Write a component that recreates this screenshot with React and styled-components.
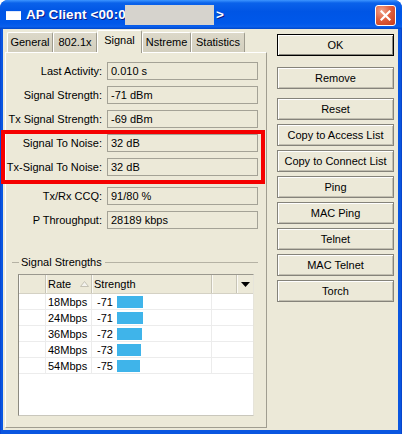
import React from 'react';
import styled, { createGlobalStyle } from 'styled-components';

const Global = createGlobalStyle`
  html, body { margin: 0; padding: 0; background: #ffffff; }
  body { font-family: "Liberation Sans", Arial, sans-serif; font-size: 11px; color: #000; }
`;

const Window = styled.div`
  position: relative;
  width: 402px;
  height: 434px;
  display: flex;
  flex-direction: column;
  background: linear-gradient(90deg, #0839c8 0, #0a56e0 1px, #0a56e0 calc(100% - 1px), #0634b8 100%);
  border-radius: 8px 8px 0 0;
  overflow: hidden;
`;

const TitleBar = styled.div`
  height: 29px;
  flex: none;
  display: flex;
  align-items: center;
  padding: 0 6px;
  background: linear-gradient(180deg, #3d95ff 0, #0a62ea 3px, #0055e5 40%, #0058ea 80%, #0a5fec 92%, #0046c8 100%);
  color: #fff;
`;

const AppIcon = styled.div`
  width: 15px;
  height: 8px;
  background: #ffffff;
  border-top: 1px solid #dfe9fb;
  margin-right: 5px;
  margin-top: 2px;
  flex: none;
`;

const TitleText = styled.div`
  font-family: "Liberation Sans", Arial, sans-serif;
  font-weight: bold;
  font-size: 13.5px;
  letter-spacing: 0.1px;
  text-shadow: 1px 1px 0 #0a1a8a;
  white-space: nowrap;
  display: flex;
  align-items: center;
`;

const Redacted = styled.span`
  display: inline-block;
  width: 89px;
  height: 20px;
  background: #d6d3cd;
  margin-left: -1px;
  margin-right: 2px;
`;

const CloseButton = styled.div`
  margin-left: auto;
  width: 21px;
  height: 21px;
  box-sizing: border-box;
  border: 1px solid #ffffff;
  border-radius: 3px;
  background: radial-gradient(circle at 30% 25%, #f0a48c 0, #e0603f 45%, #c83a17 100%);
  display: flex;
  align-items: center;
  justify-content: center;
  margin-top: 1px;
`;

const Frame = styled.div`
  flex: 1;
  display: flex;
  margin: 0 4px 4px 3px;
  background: #ece9d8;
  padding: 0 4px 1px 2px;
`;

const LeftColumn = styled.div`
  width: 262px;
  display: flex;
  flex-direction: column;
`;

const TabStrip = styled.div`
  height: 23px;
  display: flex;
  align-items: flex-end;
  padding-left: 2px;
  position: relative;
  z-index: 1;
`;

const Tab = styled.div`
  box-sizing: border-box;
  width: ${p => p.$w}px;
  height: ${p => (p.$active ? 23 : 20)}px;
  margin-bottom: ${p => (p.$active ? -1 : 0)}px;
  background: ${p => (p.$active ? '#ece9d8' : 'linear-gradient(180deg, #dcd8c9 0, #d3cfbe 100%)')};
  border-top: 1px solid #ffffff;
  border-left: 1px solid #ffffff;
  border-right: 1px solid #9e9b8e;
  border-radius: 2px 2px 0 0;
  display: flex;
  justify-content: center;
  padding-top: ${p => (p.$active ? 3 : 3)}px;
  font-size: 11px;
  white-space: nowrap;
`;

const Panel = styled.div`
  box-sizing: border-box;
  height: 376px;
  border-top: 1px solid #ffffff;
  border-left: 1px solid #ffffff;
  border-right: 1px solid #a09d90;
  border-bottom: 1px solid #a09d90;
  padding-top: 9px;
  display: flex;
  flex-direction: column;
`;

const FieldGroup = styled.div`
  display: flex;
  flex-direction: column;
  gap: 6px;
  margin-top: ${p => p.$top || 0}px;
`;

const FieldRow = styled.div`
  display: grid;
  grid-template-columns: 96px 151px;
  column-gap: 5px;
  align-items: center;
  height: 18px;
`;

const Label = styled.div`
  text-align: right;
  white-space: nowrap;
`;

const Field = styled.div`
  box-sizing: border-box;
  height: 18px;
  border: 1px solid #a4a296;
  padding-left: 3px;
  line-height: 16px;
  white-space: nowrap;
`;

const GroupTitle = styled.div`
  display: flex;
  align-items: center;
  gap: 2px;
  height: 14px;
  margin: 26px 8px 0 6px;
  white-space: nowrap;
  &::before {
    content: '';
    width: 7px;
    border-top: 1px solid #b5b2a4;
  }
  &::after {
    content: '';
    flex: 1;
    margin-left: 1px;
    border-top: 1px solid #b5b2a4;
  }
`;

const Table = styled.div`
  box-sizing: border-box;
  width: 236px;
  height: 142px;
  margin: 5px 0 0 12px;
  background: #ffffff;
  border-top: 1px solid #9a988e;
  border-left: 1px solid #8c8a80;
  border-right: 1px solid #e6e4da;
  border-bottom: 1px solid #c9c7bc;
  display: flex;
  flex-direction: column;
`;

const HeaderRow = styled.div`
  display: grid;
  grid-template-columns: 27px 46px 120px 25px 1fr;
  height: 18px;
  background: #ece9d8;
  border-bottom: 1px solid #d4d1c4;
  flex: none;
`;

const HeaderCell = styled.div`
  display: flex;
  align-items: center;
  padding-left: ${p => (p.$center ? 0 : 2)}px;
  justify-content: ${p => (p.$center ? 'center' : 'flex-start')};
  border-right: ${p => (p.$last ? 'none' : '1px solid #c7c4b6')};
  box-shadow: inset 1px 0 #fbfaf5;
  white-space: nowrap;
`;

const SortMark = styled.svg`
  margin-left: auto;
  margin-right: 2px;
`;

const BodyRow = styled.div`
  display: grid;
  grid-template-columns: 27px 46px 120px 1fr;
  height: 15px;
  border-bottom: 1px solid #ececec;
  flex: none;
`;

const BodyCell = styled.div`
  display: flex;
  align-items: center;
  padding-left: ${p => p.$pad || 0}px;
  border-right: ${p => (p.$last ? 'none' : '1px solid #ececec')};
  white-space: nowrap;
  line-height: 14px;
`;

const Value = styled.span`
  width: 20px;
  flex: none;
`;

const Bar = styled.div`
  height: 12px;
  background: #3fb4ea;
`;

const ButtonColumn = styled.div`
  width: 117px;
  margin-left: 10px;
  padding-top: 5px;
  display: flex;
  flex-direction: column;
`;

const Button = styled.div`
  box-sizing: border-box;
  height: 22px;
  width: 117px;
  margin-bottom: ${p => p.$gap}px;
  background: #ece9d8;
  border: 1px solid ${p => (p.$default ? '#000000' : '#85837a')};
  box-shadow: ${p => (p.$default ? 'inset 1px 1px #ffffff, inset -1px -1px #8a887e' : 'inset 1px 1px #ffffff, inset -1px -1px #c2bfb1')};
  display: flex;
  align-items: center;
  justify-content: center;
  font-size: 11px;
  white-space: nowrap;
`;

const Highlight = styled.div`
  position: absolute;
  left: 1px;
  top: 130px;
  width: 264px;
  height: 54px;
  box-sizing: border-box;
  border: 4px solid #f50000;
  pointer-events: none;
`;

const tabs = [
  { name: 'General', w: 46 },
  { name: '802.1x', w: 44 },
  { name: 'Signal', w: 45, active: true },
  { name: 'Nstreme', w: 49 },
  { name: 'Statistics', w: 54 },
];

const group1 = [
  ['Last Activity:', '0.010 s'],
  ['Signal Strength:', '-71 dBm'],
  ['Tx Signal Strength:', '-69 dBm'],
  ['Signal To Noise:', '32 dB'],
  ['Tx-Signal To Noise:', '32 dB'],
];

const group2 = [
  ['Tx/Rx CCQ:', '91/80 %'],
  ['P Throughput:', '28189 kbps'],
];

const rates = [
  { rate: '18Mbps', val: '-71', w: 26 },
  { rate: '24Mbps', val: '-71', w: 26 },
  { rate: '36Mbps', val: '-72', w: 25 },
  { rate: '48Mbps', val: '-73', w: 24 },
  { rate: '54Mbps', val: '-75', w: 23 },
];

const buttons = [
  { label: 'OK', gap: 11, def: true },
  { label: 'Remove', gap: 9 },
  { label: 'Reset', gap: 4 },
  { label: 'Copy to Access List', gap: 4 },
  { label: 'Copy to Connect List', gap: 4 },
  { label: 'Ping', gap: 4 },
  { label: 'MAC Ping', gap: 4 },
  { label: 'Telnet', gap: 4 },
  { label: 'MAC Telnet', gap: 4 },
  { label: 'Torch', gap: 4 },
];

export default function App() {
  return (
    <>
      <Global />
      <Window>
        <TitleBar>
          <AppIcon />
          <TitleText>
            AP Client &lt;00:0<Redacted />&gt;
          </TitleText>
          <CloseButton>
            <svg width="11" height="11" viewBox="0 0 11 11">
              <path d="M1.5 1.5 L9.5 9.5 M9.5 1.5 L1.5 9.5" stroke="#fff" strokeWidth="2.2" strokeLinecap="square" />
            </svg>
          </CloseButton>
        </TitleBar>
        <Frame>
          <LeftColumn>
            <TabStrip>
              {tabs.map(t => (
                <Tab key={t.name} $w={t.w} $active={t.active}>{t.name}</Tab>
              ))}
            </TabStrip>
            <Panel>
              <FieldGroup>
                {group1.map(([l, v]) => (
                  <FieldRow key={l}>
                    <Label>{l}</Label>
                    <Field>{v}</Field>
                  </FieldRow>
                ))}
              </FieldGroup>
              <FieldGroup $top={11}>
                {group2.map(([l, v]) => (
                  <FieldRow key={l}>
                    <Label>{l}</Label>
                    <Field>{v}</Field>
                  </FieldRow>
                ))}
              </FieldGroup>
              <GroupTitle>Signal Strengths</GroupTitle>
              <Table>
                <HeaderRow>
                  <HeaderCell />
                  <HeaderCell>
                    Rate
                    <SortMark width="9" height="6" viewBox="0 0 9 6">
                      <path d="M4.5 0.5 L8.5 5.5 L0.5 5.5 Z" fill="#f4f3ee" stroke="#c4c1b3" strokeWidth="1" />
                    </SortMark>
                  </HeaderCell>
                  <HeaderCell>Strength</HeaderCell>
                  <HeaderCell />
                  <HeaderCell $center $last>
                    <svg width="9" height="5" viewBox="0 0 9 5">
                      <path d="M0 0 L9 0 L4.5 5 Z" fill="#000" />
                    </svg>
                  </HeaderCell>
                </HeaderRow>
                {rates.map(r => (
                  <BodyRow key={r.rate}>
                    <BodyCell />
                    <BodyCell $pad={2}>{r.rate}</BodyCell>
                    <BodyCell $pad={5}>
                      <Value>{r.val}</Value>
                      <Bar style={{ width: r.w }} />
                    </BodyCell>
                    <BodyCell $last />
                  </BodyRow>
                ))}
              </Table>
            </Panel>
          </LeftColumn>
          <ButtonColumn>
            {buttons.map(b => (
              <Button key={b.label} $gap={b.gap} $default={b.def}>{b.label}</Button>
            ))}
          </ButtonColumn>
        </Frame>
        <Highlight />
      </Window>
    </>
  );
}
